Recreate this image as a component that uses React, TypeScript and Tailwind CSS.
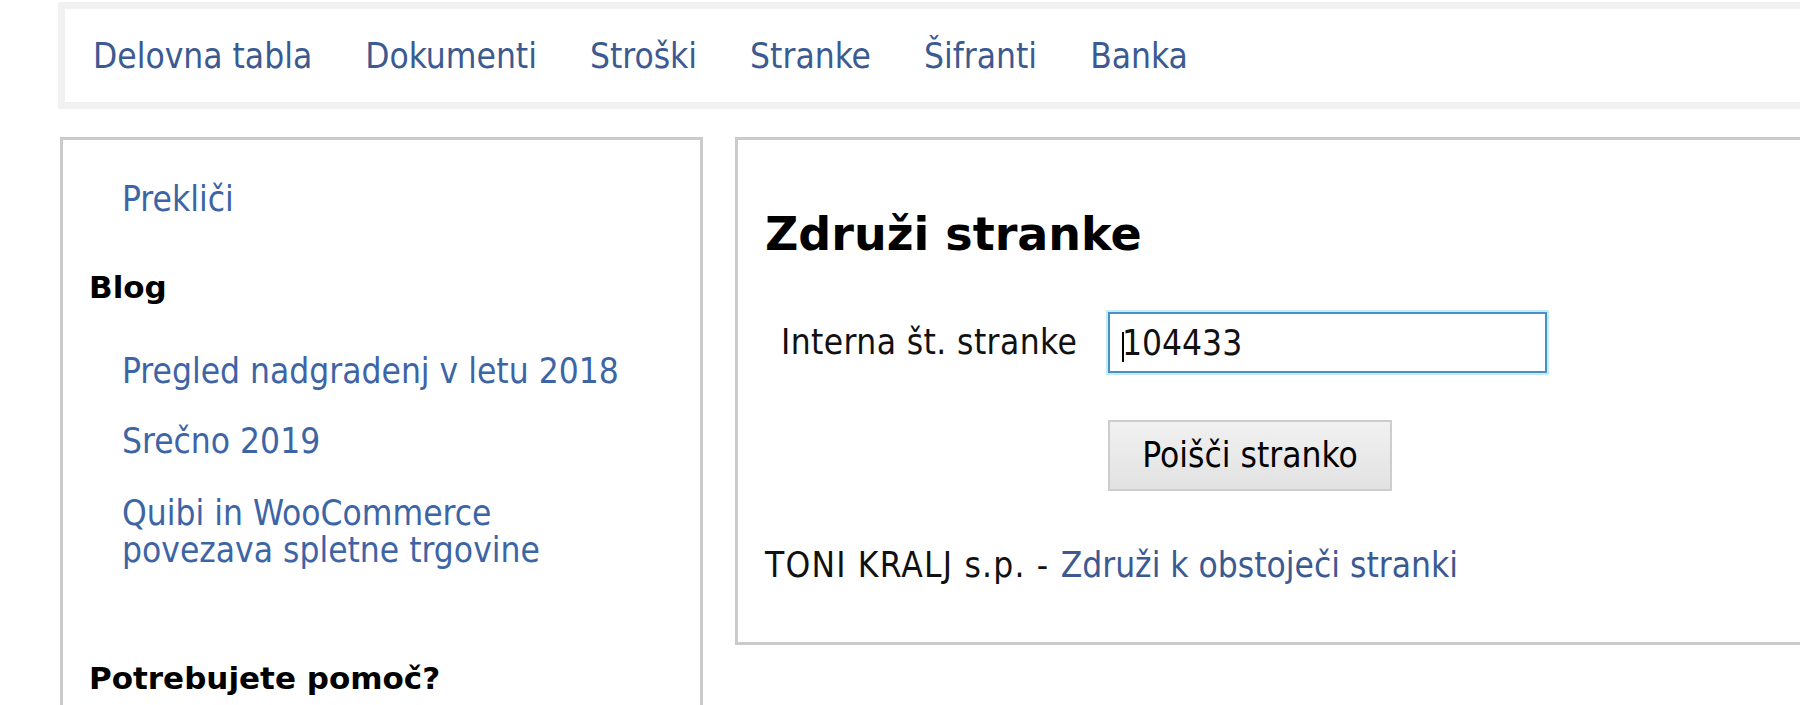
const menu = ["Delovna tabla", "Dokumenti", "Stroški", "Stranke", "Šifranti", "Banka"];

export default function App() {
  return (
    <div className="min-h-screen w-full overflow-hidden bg-white font-['DejaVu_Sans_Condensed','DejaVu_Sans',sans-serif] text-[35px] leading-[37px] text-[#111]">
      <div className="w-[1900px] pl-[58px] pt-[2px]">
        {/* top menu */}
        <nav className="flex gap-[53px] border-[7px] border-[#f1f1f1] bg-white pt-[29px] pb-[27px] pl-[28px]">
          {menu.map((m) => (
            <a key={m} href="#" className="text-[#3b5a92]">
              {m}
            </a>
          ))}
        </nav>

        <div className="ml-[2px] mt-[28px] flex items-start gap-[32px]">
          {/* sidebar */}
          <aside className="h-[640px] w-[643px] shrink-0 border-[3px] border-[#cbcbcb] pt-[41px] pl-[26px]">
            <a href="#" className="ml-[33px] block text-[#3d65a6]">
              Prekliči
            </a>
            <h3 className="mt-[51px] font-['DejaVu_Sans',sans-serif] text-[31px] leading-[36px] font-bold text-black">
              Blog
            </h3>
            <ul className="ml-[33px] mt-[48px]">
              <li>
                <a href="#" className="text-[#3d65a6]">
                  Pregled nadgradenj v letu 2018
                </a>
              </li>
              <li className="mt-[33px]">
                <a href="#" className="text-[#3d65a6]">
                  Srečno 2019
                </a>
              </li>
              <li className="mt-[35px]">
                <a href="#" className="text-[#3d65a6]">
                  Quibi in WooCommerce
                  <br />
                  povezava spletne trgovine
                </a>
              </li>
            </ul>
            <h3 className="mt-[91px] font-['DejaVu_Sans',sans-serif] text-[31px] leading-[36px] font-bold text-black">
              Potrebujete pomoč?
            </h3>
          </aside>

          {/* page */}
          <main className="flex-1 border-[3px] border-[#cbcbcb] pt-[67px] pb-[58px] pl-[27px]">
            <h1 className="font-['DejaVu_Sans',sans-serif] text-[46px] leading-[54px] font-bold text-black">
              Združi stranke
            </h1>
            <div className="ml-[16px] mt-[51px] grid grid-cols-[327px_439px] items-center">
              <label className="tracking-[0.4px] text-[#111]">Interna št. stranke</label>
              <div className="relative">
                <input
                  readOnly
                  value="104433"
                  className="h-[61px] w-[439px] border-2 border-[#4a8fc5] bg-white pl-[12px] text-[35px] leading-[37px] text-[#111] shadow-[0_0_0_2px_#c6ecfb] outline-none"
                />
                <span className="absolute left-[14px] top-[20px] h-[30px] w-[2px] bg-black" />
              </div>
              <div />
              <button className="mt-[47px] h-[71px] w-[284px] border-2 border-[#cdcdcd] bg-gradient-to-b from-[#f1f1f1] to-[#e2e2e2] text-[35px] leading-[37px] text-black">
                Poišči stranko
              </button>
            </div>
            <p className="mt-[56px] text-[#111]">
              <span className="tracking-[1.2px]">TONI KRALJ s.p. - </span>
              <a href="#" className="text-[#3b5a92]">
                Združi k obstoječi stranki
              </a>
            </p>
          </main>
        </div>
      </div>
    </div>
  );
}
